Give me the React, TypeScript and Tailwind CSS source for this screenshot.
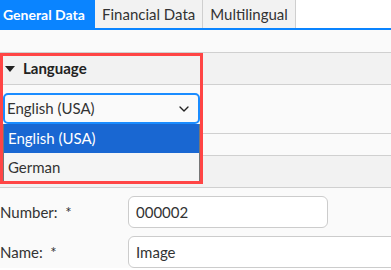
import React from "react";
import { ChevronDown } from "lucide-react";

const tabs = [
  { label: "General Data", active: true },
  { label: "Financial Data", active: false },
  { label: "Multilingual", active: false },
];

const App: React.FC = () => {
  return (
    <div className="relative w-[391px] h-[270px] overflow-hidden bg-white text-[#333] font-['Lato','Noto_Sans',sans-serif] text-[15px]">
      {/* tabs */}
      <div className="flex h-[30px] border-b-2 border-[#0a84ff]">
        {tabs.map((tab) =>
          tab.active ? (
            <div
              key={tab.label}
              className="h-[28px] pl-[3px] flex items-center bg-[#0a84ff] text-white font-bold text-[14px] w-[95px] shrink-0 whitespace-nowrap"
            >
              {tab.label}
            </div>
          ) : (
            <div
              key={tab.label}
              className="h-[28px] px-[7px] flex items-center bg-[#f2f2f2] border-r border-[#cfcfcf] text-[#333] whitespace-nowrap"
            >
              {tab.label}
            </div>
          )
        )}
      </div>

      <div className="h-[23px] bg-[#fafafa] border-b border-[#d0d0d0]" />

      {/* language section */}
      <div className="h-[32px] bg-[#f2f2f2] border-b border-[#d0d0d0] flex items-center pl-[5px] gap-[8px]">
        <svg width="10" height="6" viewBox="0 0 10 6" className="fill-[#222]">
          <polygon points="0,0 10,0 5,6" />
        </svg>
        <span className="font-bold text-[#222]">Language</span>
      </div>
      <div className="h-[49px] bg-[#fafafa] border-b border-[#d0d0d0] pt-[8px] pl-[3px]">
        <div className="w-[197px] h-[31px] rounded-[5px] border-2 border-[#1a8cff] bg-[#fafafa] flex items-center justify-between pl-[2px] pr-[6px]">
          <span>English (USA)</span>
          <ChevronDown className="w-[16px] h-[16px] text-[#222]" strokeWidth={2} />
        </div>
      </div>
      <div className="h-[22px] bg-[#fafafa] border-b border-[#d0d0d0]" />
      <div className="h-[32px] bg-[#f2f2f2] border-b border-[#d0d0d0]" />

      {/* form */}
      <div className="bg-[#fafafa]">
        <div className="flex items-center h-[48px]">
          <span className="w-[128px] shrink-0">Number:&nbsp; *</span>
          <div className="w-[200px] shrink-0 h-[32px] rounded-[6px] border border-[#cccccc] bg-white flex items-center px-[7px]">
            000002
          </div>
        </div>
        <div className="flex items-center h-[32px]">
          <span className="w-[128px] shrink-0">Name:&nbsp; *</span>
          <div className="w-[300px] shrink-0 h-[32px] rounded-[6px] border border-[#cccccc] bg-white flex items-center px-[7px]">
            Image
          </div>
        </div>
      </div>

      {/* native select popup */}
      <div className="absolute left-[3px] top-[124px] w-[197px] h-[58px] bg-[#f5f5f5] border border-t-0 border-[#767676]">
        <div className="h-[29px] bg-[#1967d2] text-white flex items-center pl-[4px]">
          English (USA)
        </div>
        <div className="h-[28px] flex items-center pl-[4px]">German</div>
      </div>

      {/* highlight */}
      <div className="absolute left-0 top-[53px] w-[203px] h-[131px] border-[3px] border-[#ff4545] pointer-events-none" />
    </div>
  );
};

export default App;
